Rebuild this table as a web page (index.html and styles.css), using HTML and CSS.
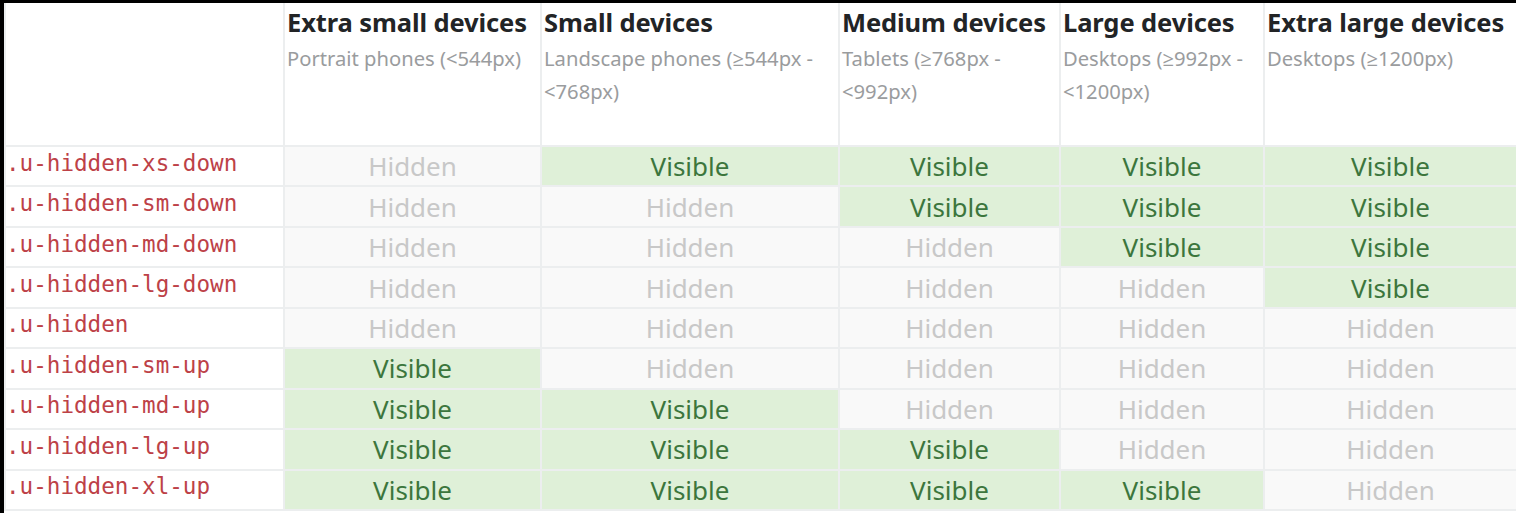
FILE: index.html
```html
<!DOCTYPE html>
<html lang="en">
<head>
<meta charset="utf-8">
<title>Responsive utilities</title>
<link rel="stylesheet" href="styles.css">
</head>
<body>
<div class="frame">
<table class="grid">
  <colgroup>
    <col class="c0"><col class="c1"><col class="c2"><col class="c3"><col class="c4"><col class="c5">
  </colgroup>
  <thead>
    <tr>
      <th></th>
      <th><span class="title">Extra small devices</span><span class="sub">Portrait phones (&lt;544px)</span></th>
      <th><span class="title">Small devices</span><span class="sub">Landscape phones (&ge;544px - &lt;768px)</span></th>
      <th><span class="title">Medium devices</span><span class="sub">Tablets (&ge;768px - &lt;992px)</span></th>
      <th><span class="title">Large devices</span><span class="sub">Desktops (&ge;992px - &lt;1200px)</span></th>
      <th><span class="title">Extra large devices</span><span class="sub">Desktops (&ge;1200px)</span></th>
    </tr>
  </thead>
  <tbody>
    <tr><th><code>.u-hidden-xs-down</code></th><td class="hid">Hidden</td><td class="vis">Visible</td><td class="vis">Visible</td><td class="vis">Visible</td><td class="vis">Visible</td></tr>
    <tr><th><code>.u-hidden-sm-down</code></th><td class="hid">Hidden</td><td class="hid">Hidden</td><td class="vis">Visible</td><td class="vis">Visible</td><td class="vis">Visible</td></tr>
    <tr><th><code>.u-hidden-md-down</code></th><td class="hid">Hidden</td><td class="hid">Hidden</td><td class="hid">Hidden</td><td class="vis">Visible</td><td class="vis">Visible</td></tr>
    <tr><th><code>.u-hidden-lg-down</code></th><td class="hid">Hidden</td><td class="hid">Hidden</td><td class="hid">Hidden</td><td class="hid">Hidden</td><td class="vis">Visible</td></tr>
    <tr><th><code>.u-hidden</code></th><td class="hid">Hidden</td><td class="hid">Hidden</td><td class="hid">Hidden</td><td class="hid">Hidden</td><td class="hid">Hidden</td></tr>
    <tr><th><code>.u-hidden-sm-up</code></th><td class="vis">Visible</td><td class="hid">Hidden</td><td class="hid">Hidden</td><td class="hid">Hidden</td><td class="hid">Hidden</td></tr>
    <tr><th><code>.u-hidden-md-up</code></th><td class="vis">Visible</td><td class="vis">Visible</td><td class="hid">Hidden</td><td class="hid">Hidden</td><td class="hid">Hidden</td></tr>
    <tr><th><code>.u-hidden-lg-up</code></th><td class="vis">Visible</td><td class="vis">Visible</td><td class="vis">Visible</td><td class="hid">Hidden</td><td class="hid">Hidden</td></tr>
    <tr><th><code>.u-hidden-xl-up</code></th><td class="vis">Visible</td><td class="vis">Visible</td><td class="vis">Visible</td><td class="vis">Visible</td><td class="hid">Hidden</td></tr>
  </tbody>
</table>
</div>
</body>
</html>
```
FILE: styles.css
```css
html, body {
  margin: 0;
  padding: 0;
  background: #fff;
}
body {
  font-family: "Noto Sans", "Open Sans", sans-serif;
  color: #292b2c;
  overflow: hidden;
}
.frame {
  border-top: 3px solid #000;
  border-left: 4px solid #000;
  height: 510px;
  overflow: hidden;
}
.grid {
  border-collapse: collapse;
  table-layout: fixed;
  width: 1512px;
  margin-top: -2px;
}
.c0 { width: 279px; }
.c1 { width: 257px; }
.c2 { width: 298px; }
.c3 { width: 221px; }
.c4 { width: 204px; }
.c5 { width: 253px; }
.grid th, .grid td {
  border: 2px solid #eceeef;
  padding: 0;
}
.grid thead th {
  height: 138px;
  vertical-align: top;
  text-align: left;
  padding: 4px 3px 0 2px;
}
.title {
  display: block;
  font-weight: 700;
  font-size: 25.5px;
  line-height: 30px;
  white-space: nowrap;
  color: #222426;
  letter-spacing: -0.1px;
}
.sub {
  display: block;
  font-size: 20.2px;
  line-height: 33px;
  color: #9a9c9e;
  font-weight: 400;
  margin-top: 5px;
}
.grid tbody th {
  text-align: left;
  vertical-align: middle;
  height: 31.44px;
  padding: 0 0 7px 0;
  font-weight: 400;
}
code {
  font-family: "DejaVu Sans Mono", "Liberation Mono", monospace;
  font-size: 22.6px;
  color: #bd4147;
}
.grid td {
  text-align: center;
  vertical-align: middle;
  font-size: 26px;
  height: 38.44px;
}
.hid {
  background: #f9f9f9;
  color: #c8c8c8;
}
.vis {
  background: #dff0d8;
  color: #3c763d;
}
```
